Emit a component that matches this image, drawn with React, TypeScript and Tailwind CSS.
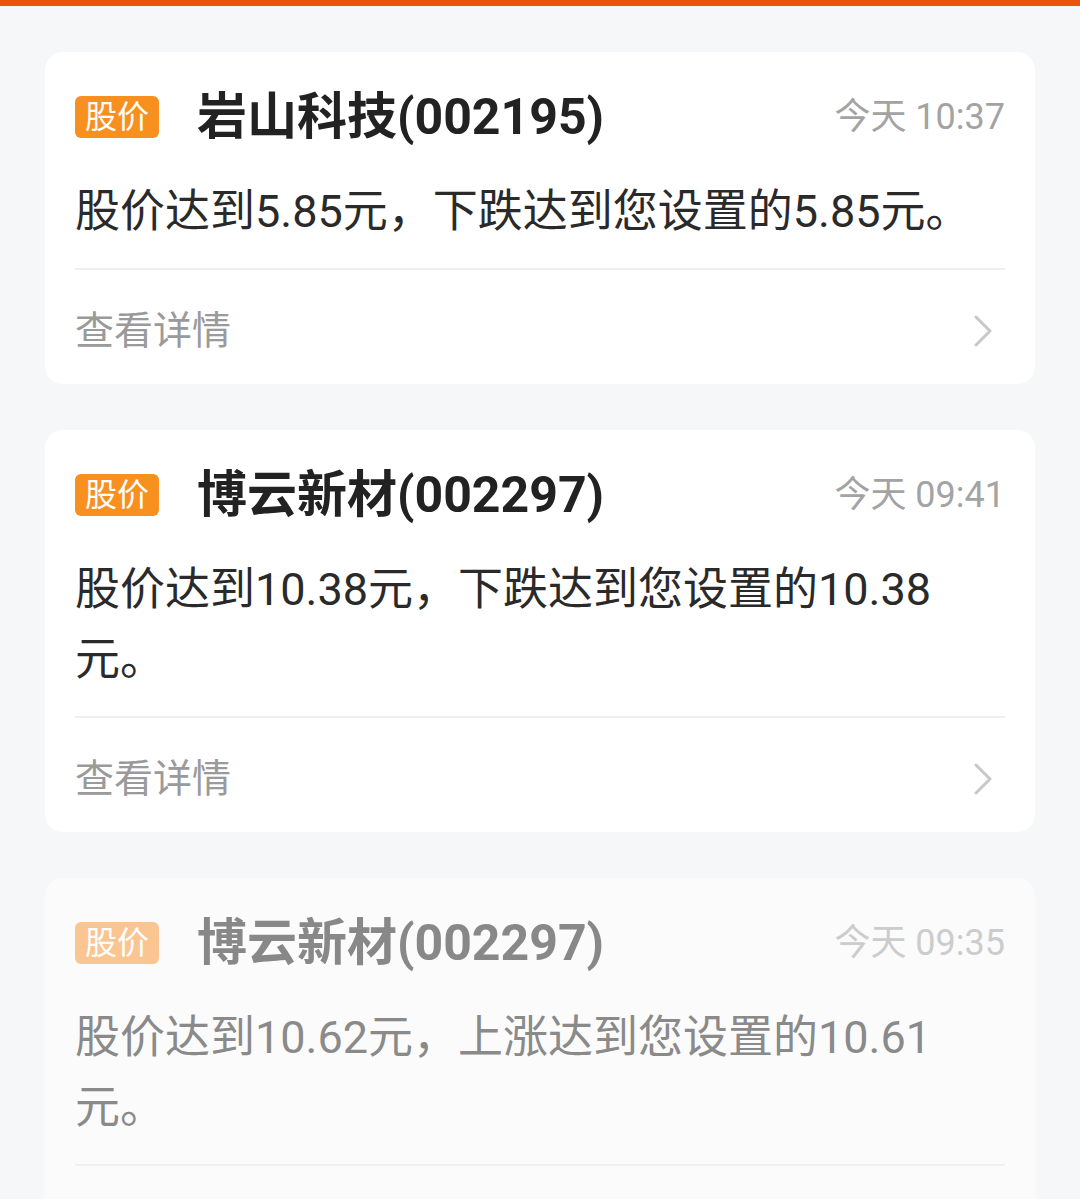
import React from "react";

type Item = {
  name: string;
  time: string;
  body: string;
  faded?: boolean;
};

const items: Item[] = [
  { name: "岩山科技(002195)", time: "今天 10:37", body: "股价达到5.85元，下跌达到您设置的5.85元。" },
  { name: "博云新材(002297)", time: "今天 09:41", body: "股价达到10.38元，下跌达到您设置的10.38元。" },
  { name: "博云新材(002297)", time: "今天 09:35", body: "股价达到10.62元，上涨达到您设置的10.61元。", faded: true },
];

function Chevron({ color }: { color: string }) {
  return (
    <svg width="20" height="32" viewBox="0 0 20 32" fill="none">
      <path d="M3 2 L17 16 L3 30" stroke={color} strokeWidth="3" strokeLinecap="round" strokeLinejoin="round" />
    </svg>
  );
}

function Card({ item }: { item: Item }) {
  const f = item.faded;
  return (
    <div className={`rounded-[18px] px-[30px] ${f ? "bg-[#fbfbfb]" : "bg-white"}`}>
      <div className="pt-[38px] h-[92px] flex items-center">
        <div className="flex h-[54px] items-center w-full">
          <div
            className={`w-[84px] h-[42px] rounded-[6px] flex items-center justify-center text-white text-[32px] leading-none ${
              f ? "bg-[#fbc591]" : "bg-[#f8901f]"
            }`}
          >
            股价
          </div>
          <div
            className={`ml-[38px] text-[50px] font-bold leading-none ${f ? "text-[#888888]" : "text-[#222222]"}`}
          >
            {item.name}
          </div>
          <div className={`ml-auto text-[36px] leading-none ${f ? "text-[#cccccc]" : "text-[#a3a3a3]"}`}>
            {item.time}
          </div>
        </div>
      </div>
      <div
        className={`mt-[33px] mr-[20px] text-[45px] leading-[70px] ${f ? "text-[#8a8a8a]" : "text-[#2a2a2a]"}`}
      >
        {item.body}
      </div>
      <div className="mt-[21px] h-[2px] bg-[#f0f0f0]" />
      <div className="h-[114px] flex items-center justify-between pt-[8px]">
        <span className={`text-[39px] leading-none ${f ? "text-[#bbbbbb]" : "text-[#9a9a9a]"}`}>查看详情</span>
        <span className="mr-[12px]">
          <Chevron color={f ? "#e0e0e0" : "#c8c8c8"} />
        </span>
      </div>
    </div>
  );
}

export default function App() {
  return (
    <div
      className="w-[1080px] h-[1199px] overflow-hidden bg-[#f6f7f9]"
      style={{ fontFamily: 'Roboto, "Noto Sans CJK SC", sans-serif' }}
    >
      <div className="h-[6px] bg-[#e85708]" />
      <div className="px-[45px] pt-[46px] flex flex-col gap-[46px]">
        {items.map((it, i) => (
          <Card key={i} item={it} />
        ))}
      </div>
    </div>
  );
}
